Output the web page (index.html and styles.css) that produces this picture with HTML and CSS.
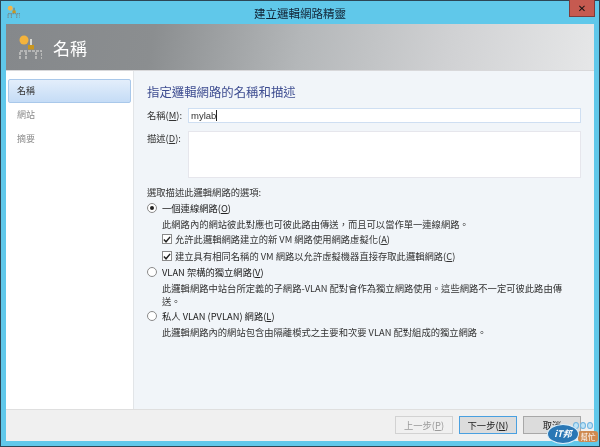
FILE: index.html
```html
<!DOCTYPE html>
<html lang="zh-Hant">
<head>
<meta charset="utf-8">
<title>建立邏輯網路精靈</title>
<link rel="stylesheet" href="styles.css">
</head>
<body>
<div class="window">
  <div class="titlebar">
    <svg class="title-icon" width="13" height="13" viewBox="0 0 24 24"><circle cx="6" cy="6" r="4.5" fill="#f2b64a"/><rect x="12" y="5" width="2" height="7" fill="#77776f"/><rect x="10" y="10" width="6" height="5" fill="#c9961f"/><path d="M2 24v-8h22v8M8 24v-8M18 24v-8" fill="none" stroke="#7b7b74" stroke-width="1.6" stroke-dasharray="3 1"/></svg>
    <span class="title-text">建立邏輯網路精靈</span>
    <button class="close">✕</button>
  </div>
  <div class="client">
    <header class="banner">
      <svg class="banner-icon" width="24" height="24" viewBox="0 0 24 24"><circle cx="6" cy="5" r="4.5" fill="#f4b33c"/><rect x="12" y="4" width="2" height="8" fill="#d8d8d2"/><rect x="10" y="10" width="6" height="4.5" fill="#c9961f"/><path d="M2 24v-8h22v8M8 24v-8M18 24v-8" fill="none" stroke="#c4c4c2" stroke-width="1.6" stroke-dasharray="3 1"/></svg>
      <span class="banner-title">名稱</span>
    </header>
    <div class="main">
      <nav class="nav">
        <div class="nav-item active">名稱</div>
        <div class="nav-item">網站</div>
        <div class="nav-item">摘要</div>
      </nav>
      <section class="content">
        <h1 class="heading">指定邏輯網路的名稱和描述</h1>
        <div class="field name-field">
          <label class="field-label">名稱(<u>M</u>):</label>
          <div class="input focused">mylab<span class="caret"></span></div>
        </div>
        <div class="field desc-field">
          <label class="field-label">描述(<u>D</u>):</label>
          <div class="textarea"></div>
        </div>
        <p class="group-label">選取描述此邏輯網路的選項:</p>
        <div class="option"><span class="radio checked"></span><span>一個連線網路(<u>O</u>)</span></div>
        <p class="desc">此網路內的網站彼此對應也可彼此路由傳送，而且可以當作單一連線網路。</p>
        <div class="check first-check"><span class="box"><svg width="9" height="9" viewBox="0 0 9 9"><path d="M1 4.5l2.4 2.6L8 1.5" fill="none" stroke="#222" stroke-width="1.6"/></svg></span><span>允許此邏輯網路建立的新 VM 網路使用網路虛擬化(<u>A</u>)</span></div>
        <div class="check"><span class="box"><svg width="9" height="9" viewBox="0 0 9 9"><path d="M1 4.5l2.4 2.6L8 1.5" fill="none" stroke="#222" stroke-width="1.6"/></svg></span><span>建立具有相同名稱的 VM 網路以允許虛擬機器直接存取此邏輯網路(<u>C</u>)</span></div>
        <div class="option"><span class="radio"></span><span>VLAN 架構的獨立網路(<u>V</u>)</span></div>
        <p class="desc">此邏輯網路中站台所定義的子網路-VLAN 配對會作為獨立網路使用。這些網路不一定可彼此路由傳送。</p>
        <div class="option"><span class="radio"></span><span>私人 VLAN (PVLAN) 網路(<u>L</u>)</span></div>
        <p class="desc">此邏輯網路內的網站包含由隔離模式之主要和次要 VLAN 配對組成的獨立網路。</p>
      </section>
    </div>
    <footer class="footer">
      <button class="btn disabled">上一步(<u>P</u>)</button>
      <button class="btn primary">下一步(<u>N</u>)</button>
      <button class="btn">取消</button>
    </footer>
  </div>
  <div class="watermark">
    <span class="wm-bubbles"><i></i><i></i><i></i></span>
    <span class="wm-sub">幫忙</span>
    <span class="wm-main">iT邦</span>
  </div>
</div>
</body>
</html>
```
FILE: styles.css
```css
* { box-sizing: border-box; }
html, body { margin: 0; padding: 0; }
body { width: 600px; height: 447px; overflow: hidden; font-family: "Noto Sans CJK TC", "Liberation Sans", sans-serif; font-size: 9.3px; color: #333; }
.window { position: relative; width: 600px; height: 447px; background: #60c8ea; border: 1px solid #2c4656; padding: 0 5px 5px; display: flex; flex-direction: column; filter: blur(0.25px); }
.titlebar { height: 23px; flex: none; display: flex; align-items: center; justify-content: center; position: relative; }
.title-icon { position: absolute; left: 1px; top: 4px; }
.title-text { font-size: 11.5px; color: #123; }
.close { position: absolute; right: -1px; top: -1px; width: 26px; height: 17px; background: #c65a50; border: 1px solid #7d3c3c; border-top: 0; color: #111; font-size: 10px; font-weight: 700; padding: 0; line-height: 15px; font-family: "DejaVu Sans", sans-serif; }
.client { flex: 1; display: flex; flex-direction: column; background: #f1f5f9; min-height: 0; }
.banner { height: 47px; flex: none; display: flex; align-items: center; padding-left: 12px; background: linear-gradient(100deg, #85888b 0%, #8b8e90 25%, #b4b7b9 50%, #d0d1d3 75%, #e6e7e8 100%); border-bottom: 1px solid #d8d8da; }
.banner-title { font-size: 17px; color: #fff; margin-left: 11px; }
.main { flex: 1; display: flex; min-height: 0; }
.nav { width: 128px; flex: none; background: #fff; border-right: 1px solid #e2e5e8; padding: 8px 2px 0; }
.nav-item { height: 24px; line-height: 24px; padding-left: 9px; color: #8a8a8a; font-size: 9px; }
.nav-item.active { color: #333; background: linear-gradient(#e3eefb, #c5dcf6); border: 1px solid #a9c8ea; border-radius: 2px; line-height: 22px; padding-left: 8px; }
.content { flex: 1; padding: 13px 13px 0 13px; min-width: 0; }
.heading { margin: 0 0 8px; font-size: 12.4px; line-height: 16px; font-weight: 400; color: #3d4c90; }
.field { display: flex; }
.field-label { width: 41px; flex: none; line-height: 14px; }
.input { flex: 1; height: 15px; background: #fff; border: 1px solid #cfdff2; line-height: 13px; padding-left: 2px; font-family: "Liberation Sans", sans-serif; font-size: 9.5px; display: flex; align-items: center; }
.caret { width: 1px; height: 11px; background: #222; }
.desc-field { margin-top: 8px; }
.textarea { flex: 1; height: 47px; background: #fff; border: 1px solid #e6e6ec; }
.group-label { margin: 7px 0 0; line-height: 14px; }
.option { display: flex; align-items: center; gap: 5px; height: 14px; margin-top: 2px; color: #222; }
.radio { width: 10px; height: 10px; border-radius: 50%; border: 1px solid #8a8a8a; background: #fff; flex: none; display: flex; align-items: center; justify-content: center; }
.radio.checked::after { content: ""; width: 4px; height: 4px; border-radius: 50%; background: #222; }
.desc { margin: 3px 0 0 15px; line-height: 12.5px; width: 410px; }
.check { display: flex; align-items: center; gap: 3px; height: 14px; margin: 3px 0 0 15px; }
.check.first-check { margin-top: 1.5px; }
.box { width: 10px; height: 10px; background: #fff; border: 1px solid #8a8a8a; flex: none; display: flex; align-items: center; justify-content: center; }
.footer { height: 32px; flex: none; display: flex; justify-content: flex-end; gap: 6px; padding: 6px 13px 0 0; background: #f0f0f0; border-top: 1px solid #dfdfdf; }
.btn { width: 58px; height: 18px; padding: 0; background: #dcdcdc; border: 1px solid #a8a8a8; font-family: inherit; font-size: 9.3px; color: #222; line-height: 14px; }
.btn.disabled { background: #f0f0f0; border-color: #d2d2d2; color: #9a9a9a; }
.btn.primary { border-color: #4aa0e0; }
.watermark { position: absolute; left: 546px; top: 418px; width: 51px; height: 26px; }
.wm-main { position: absolute; left: 0; top: 5px; width: 32px; height: 20px; border-radius: 50%; border: 1px solid #dff1fb; background: #2a77b5; color: #fff; font: italic 700 9px/18px "Noto Sans CJK TC", sans-serif; text-align: center; }
.wm-sub { position: absolute; left: 31px; top: 12px; width: 20px; height: 11px; border-radius: 3px; background: #cf8a50; color: #fff; font-size: 7.5px; line-height: 11px; text-align: center; }
.wm-bubbles { position: absolute; left: 26px; top: 3px; display: flex; gap: 1px; }
.wm-bubbles i { width: 6px; height: 7px; border-radius: 50%; background: #bfe3f6; border: 1px solid #6fb4e0; }
```
